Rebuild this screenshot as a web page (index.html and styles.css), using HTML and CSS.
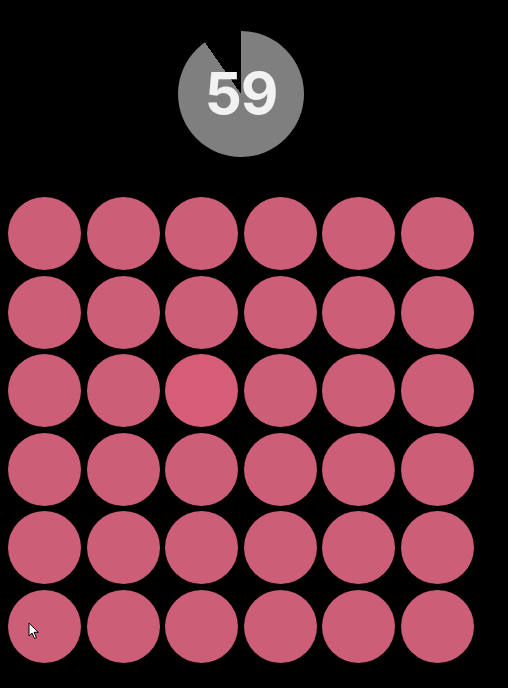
FILE: index.html
```html
<!DOCTYPE html>
<html lang="en">
<head>
    <meta charset="UTF-8">
    <meta name="viewport" content="width=device-width, initial-scale=1.0">
    <title>Color Game</title>
    <link rel="stylesheet" href="styles.css">
</head>
<body>
    <div class="game">
        <div class="header">
            <div class="timer">
                <span class="timer-value">59</span>
            </div>
        </div>
        <div class="board" id="board"></div>
    </div>

    <svg class="cursor" width="12" height="18" viewBox="0 0 12 18">
        <path d="M1 1 L1 14 L4 11 L6.5 16.5 L8.5 15.6 L6 10.3 L10.2 10.3 Z" fill="#fff" stroke="#000" stroke-width="1"/>
    </svg>

    <script>
        // board: 6x6, one tile is the odd one
        const board = document.getElementById("board");
        const oddIndex = 14;
        for (let i = 0; i < 36; i++) {
            const tile = document.createElement("div");
            tile.className = i === oddIndex ? "tile odd" : "tile";
            board.appendChild(tile);
        }
    </script>
</body>
</html>
```

FILE: styles.css
```css
body {
    margin: 0;
    background-color: #000;
    font-family: Inter, "Open Sans", Arial, sans-serif;
}

.game {
    width: 466px;
    padding: 0 8px;
}

.header {
    display: flex;
    justify-content: center;
    padding-top: 31px;
    padding-bottom: 40px;
}

.timer {
    width: 126px;
    height: 126px;
    border-radius: 50%;
    background: conic-gradient(#7f7f7f 0deg 325deg, transparent 325deg 360deg);
    display: flex;
    align-items: center;
    justify-content: center;
}

.timer-value {
    color: #f2f2f2;
    font-size: 58px;
    font-weight: 700;
    line-height: 1;
    letter-spacing: -1px;
    margin-top: -3px;
}

.board {
    display: grid;
    grid-template-columns: repeat(6, 73px);
    grid-auto-rows: 73px;
    gap: 5.6px;
}

.tile {
    border-radius: 50%;
    background-color: #cc5e77;
}

.tile.odd {
    background-color: #d65d75;
}

.cursor {
    position: absolute;
    left: 28px;
    top: 622px;
}
```
